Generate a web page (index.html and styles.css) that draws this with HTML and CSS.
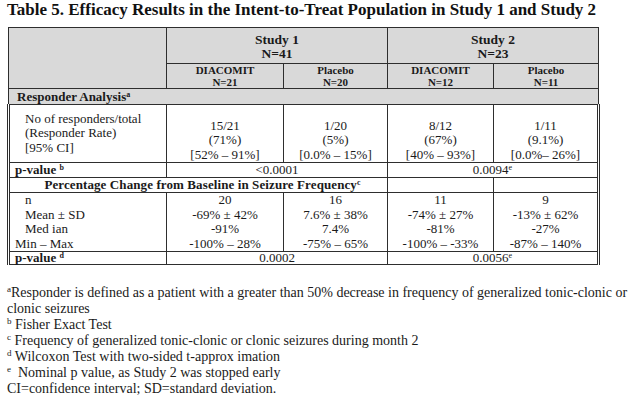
FILE: index.html
```html
<!DOCTYPE html>
<html>
<head>
<meta charset="utf-8">
<link rel="stylesheet" href="styles.css">
</head>
<body>
<div class="page">
  <h1 class="title">Table 5. Efficacy Results in the Intent-to-Treat Population in Study 1 and Study 2</h1>
  <table class="eff">
    <colgroup>
      <col class="c1"><col class="c2"><col class="c3"><col class="c4"><col class="c5">
    </colgroup>
    <tr class="r-study">
      <td class="hd" rowspan="2"></td>
      <td class="hd study" colspan="2">Study 1<br>N=41</td>
      <td class="hd study" colspan="2">Study 2<br>N=23</td>
    </tr>
    <tr class="r-arm">
      <td class="hd arm">DIACOMIT<br>N=21</td>
      <td class="hd arm">Placebo<br>N=20</td>
      <td class="hd arm">DIACOMIT<br>N=12</td>
      <td class="hd arm">Placebo<br>N=11</td>
    </tr>
    <tr class="r-sec">
      <td class="hd sec" colspan="5">Responder Analysis<sup class="sup">a</sup></td>
    </tr>
    <tr class="r-data">
      <td class="lab first"><div class="ind">No of responders/total<br>(Responder Rate)<br>[95% CI]</div></td>
      <td class="val bottom">15/21<br>(71%)<br>[52% – 91%]</td>
      <td class="val bottom">1/20<br>(5%)<br>[0.0% – 15%]</td>
      <td class="val bottom">8/12<br>(67%)<br>[40% – 93%]</td>
      <td class="val bottom last">1/11<br>(9.1%)<br>[0.0%– 26%]</td>
    </tr>
    <tr class="r-p">
      <td class="lab first pv">p-value <sup class="sup">b</sup></td>
      <td class="val" colspan="2">&lt;0.0001</td>
      <td class="val last" colspan="2">0.0094<sup class="sup">e</sup></td>
    </tr>
    <tr class="r-p">
      <td class="val first pct" colspan="3">Percentage Change from Baseline in Seizure Frequency<sup class="sup">c</sup></td>
      <td class="val"></td>
      <td class="val last"></td>
    </tr>
    <tr class="r-data">
      <td class="lab first">
        <div class="ind">n</div>
        <div class="ind">Mean ± SD</div>
        <div class="ind">Med ian</div>
        <div class="out">Min – Max</div>
      </td>
      <td class="val">20<br>-69% ± 42%<br>-91%<br>-100% – 28%</td>
      <td class="val">16<br>7.6% ± 38%<br>7.4%<br>-75% – 65%</td>
      <td class="val">11<br>-74% ± 27%<br>-81%<br>-100% – -33%</td>
      <td class="val last">9<br>-13% ± 62%<br>-27%<br>-87% – 140%</td>
    </tr>
    <tr class="r-p2">
      <td class="lab first pv">p-value <sup class="sup">d</sup></td>
      <td class="val" colspan="2">0.0002</td>
      <td class="val last" colspan="2">0.0056<sup class="sup">e</sup></td>
    </tr>
  </table>
  <div class="notes">
    <p class="note"><sup class="fs">a</sup>Responder is defined as a patient with a greater than 50% decrease in frequency of generalized tonic-clonic or</p>
    <p class="note">clonic seizures</p>
    <p class="note"><sup class="fs">b</sup> Fisher Exact Test</p>
    <p class="note"><sup class="fs">c</sup> Frequency of generalized tonic-clonic or clonic seizures during month 2</p>
    <p class="note"><sup class="fs">d</sup> Wilcoxon Test with two-sided t-approx imation</p>
    <p class="note"><sup class="fs">e</sup>&nbsp; Nominal p value, as Study 2 was stopped early</p>
    <p class="note">CI=confidence interval; SD=standard deviation.</p>
  </div>
</div>
</body>
</html>
```

FILE: styles.css
```css
html, body {
  margin: 0;
  padding: 0;
  background: #ffffff;
}
body {
  font-family: "Liberation Serif", "Times New Roman", serif;
  color: #1a1a1a;
}
.page {
  width: 640px;
  height: 401px;
  overflow: hidden;
  padding: 0 0 0 7px;
  box-sizing: border-box;
}
.title {
  margin: 0;
  font-size: 17px;
  line-height: 20px;
  font-weight: bold;
  color: #111;
  white-space: nowrap;
}
.eff {
  margin-top: 7px;
  border-collapse: collapse;
  table-layout: fixed;
  width: 590px;
  font-size: 13px;
  line-height: 14.5px;
}
.c1 { width: 158px; }
.c2 { width: 117px; }
.c3 { width: 104px; }
.c4 { width: 106px; }
.c5 { width: 105px; }
.eff td {
  border: 1px solid #2e2e2e;
  padding: 0;
  text-align: center;
  vertical-align: middle;
}
.eff td.hd {
  background: #d9d9d9;
  font-weight: bold;
}
.r-study td { height: 33px; }
.eff td.study {
  font-size: 13.5px;
  line-height: 13.5px;
  padding-top: 2px;
}
.r-arm td { height: 24px; }
.eff td.arm {
  font-size: 11px;
  line-height: 12px;
}
.r-sec td { height: 15px; }
.eff td.sec {
  text-align: left;
  padding-left: 8px;
  line-height: 14px;
}
.r-data td { height: 57px; }
.r-p td { height: 14px; line-height: 14px; }
.r-p2 td { height: 12px; line-height: 12px; }
.eff td.first { border-left: 3px double #2e2e2e; }
.eff td.last { border-right: 3px double #2e2e2e; }
.eff td.lab { text-align: left; }
.ind { padding-left: 15px; }
.out { padding-left: 5px; }
.eff td.pv {
  font-weight: bold;
  padding-left: 5px;
}
.eff td.pct {
  font-weight: bold;
  letter-spacing: 0.1px;
  padding-left: 8px;
}
.eff td.bottom { vertical-align: bottom; }
.sup {
  font-size: 8px;
  line-height: 0;
  vertical-align: 4px;
}
.notes {
  margin-top: 20px;
  font-size: 14px;
  line-height: 16px;
  color: #1a1a1a;
}
.note {
  margin: 0;
  white-space: nowrap;
}
.fs {
  font-size: 9px;
  line-height: 0;
  vertical-align: 5px;
}
```
